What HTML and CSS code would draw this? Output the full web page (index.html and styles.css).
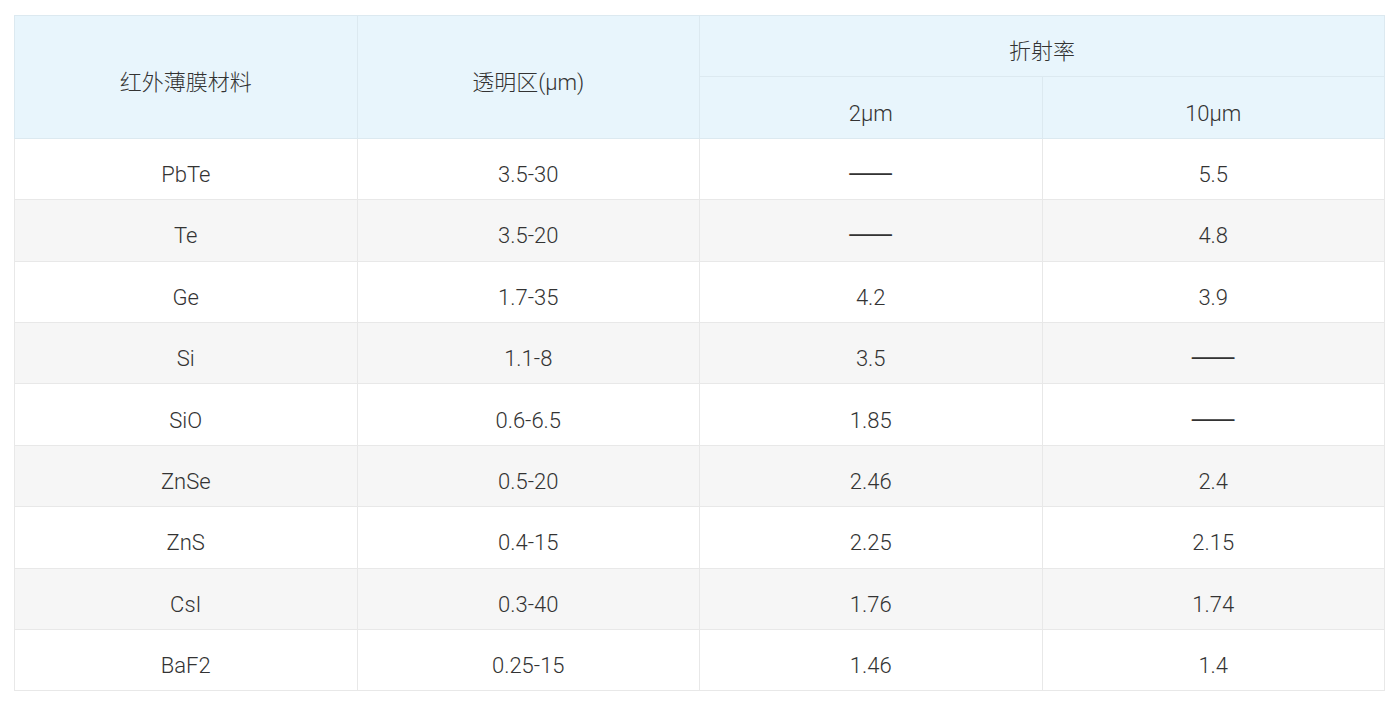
FILE: index.html
```html
<!DOCTYPE html>
<html lang="zh-CN">
<head>
<meta charset="utf-8">
<title>红外薄膜材料</title>
<link rel="stylesheet" href="styles.css">
</head>
<body>
<div class="wrap">
<table class="data">
<colgroup><col><col><col><col></colgroup>
<thead>
<tr>
<th rowspan="2">红外薄膜材料</th>
<th rowspan="2">透明区(μm)</th>
<th colspan="2">折射率</th>
</tr>
<tr>
<th>2μm</th>
<th>10μm</th>
</tr>
</thead>
<tbody>
<tr><td>PbTe</td><td>3.5-30</td><td><span class="dash">——</span></td><td>5.5</td></tr>
<tr><td>Te</td><td>3.5-20</td><td><span class="dash">——</span></td><td>4.8</td></tr>
<tr><td>Ge</td><td>1.7-35</td><td>4.2</td><td>3.9</td></tr>
<tr><td>Si</td><td>1.1-8</td><td>3.5</td><td><span class="dash">——</span></td></tr>
<tr><td>SiO</td><td>0.6-6.5</td><td>1.85</td><td><span class="dash">——</span></td></tr>
<tr><td>ZnSe</td><td>0.5-20</td><td>2.46</td><td>2.4</td></tr>
<tr><td>ZnS</td><td>0.4-15</td><td>2.25</td><td>2.15</td></tr>
<tr><td>CsI</td><td>0.3-40</td><td>1.76</td><td>1.74</td></tr>
<tr><td>BaF2</td><td>0.25-15</td><td>1.46</td><td>1.4</td></tr>
</tbody>
</table>
</div>
</body>
</html>
```
FILE: styles.css
```css
html, body {
  margin: 0;
  padding: 0;
  background: #ffffff;
}
.wrap {
  padding: 15px 15px 0 14px;
}
.data {
  width: 1371px;
  border-collapse: collapse;
  table-layout: fixed;
  font-family: Roboto, "Noto Sans CJK SC", sans-serif;
  font-size: 22px;
  color: #333333;
}
.data th,
.data td {
  text-align: center;
  font-weight: 300;
  padding: 12px 0 0 0;
  line-height: 30px;
  vertical-align: middle;
}
.data th {
  background: #e8f5fc;
  border: 1px solid #dce9f0;
  height: 61.4px;
  box-sizing: border-box;
}
.data td {
  border: 1px solid #e8e8e8;
  height: 61.4px;
  box-sizing: border-box;
}
.data tbody tr:nth-child(even) td {
  background: #f6f6f6;
}
.dash {
  font-family: "Noto Sans CJK SC", sans-serif;
  font-weight: 400;
  font-size: 27px;
  line-height: 0;
  vertical-align: 0;
}
```
